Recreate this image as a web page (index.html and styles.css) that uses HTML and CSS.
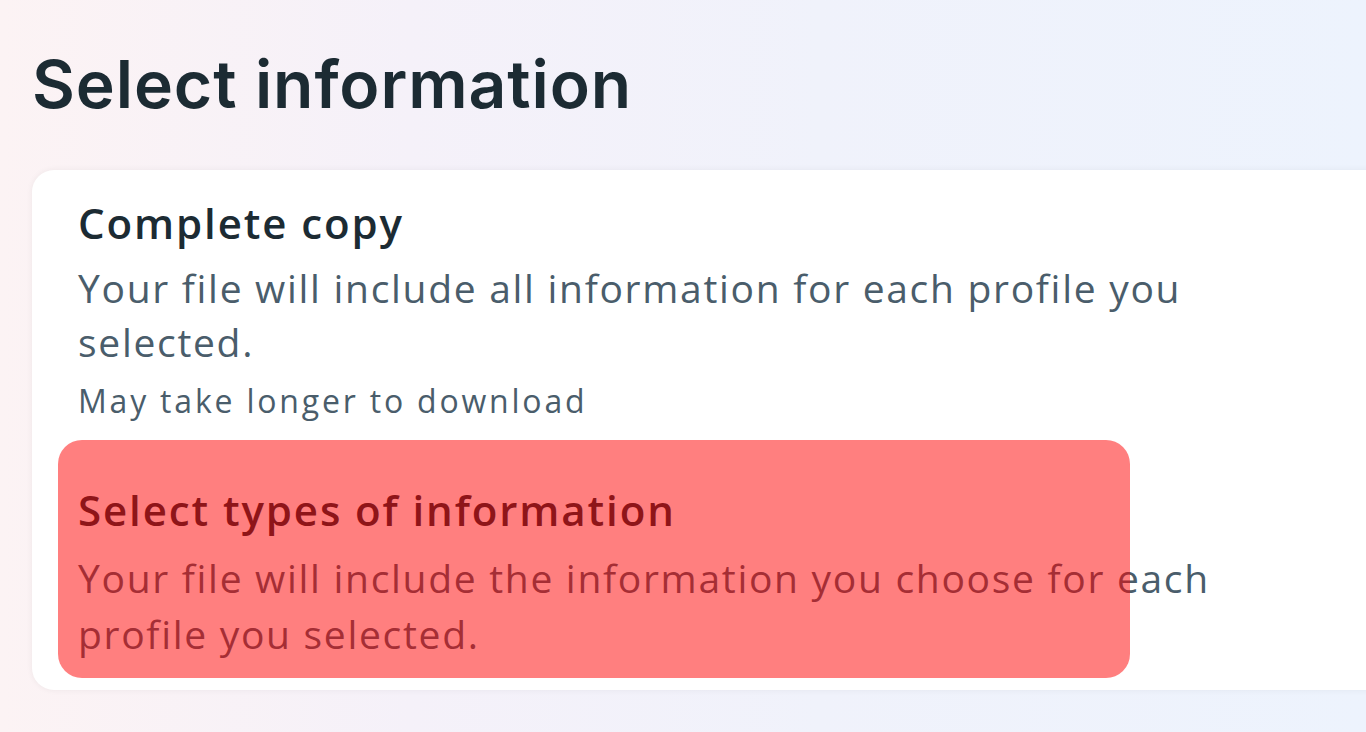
FILE: index.html
```html
<!DOCTYPE html>
<html lang="en">
<head>
<meta charset="utf-8">
<title>Select information</title>
<link rel="stylesheet" href="styles.css">
</head>
<body>
<main class="page">
  <h1 class="page-title">Select information</h1>
  <section class="card">
    <div class="option">
      <div class="option-title">Complete copy</div>
      <div class="option-desc">Your file will include all information for each profile you<br>selected.</div>
      <div class="option-note">May take longer to download</div>
    </div>
    <div class="option option-second">
      <div class="option-title">Select types of information</div>
      <div class="option-desc">Your file will include the information you choose for each<br>profile you selected.</div>
    </div>
    <div class="highlight"></div>
  </section>
</main>
</body>
</html>
```
FILE: styles.css
```css
html, body {
  margin: 0;
  padding: 0;
  height: 100%;
  overflow: hidden;
}
body {
  background: linear-gradient(90deg, #fcf3f4 0%, #f5f1f9 30%, #f0f2fb 60%, #edf3fd 100%);
  font-family: "Open Sans", "Liberation Sans", sans-serif;
  color: #1c2b33;
}
.page {
  padding: 44px 0 0 32px;
}
.page-title {
  margin: 0;
  font-family: "Inter", "Liberation Sans", sans-serif;
  font-weight: 600;
  font-size: 66px;
  line-height: 80px;
  letter-spacing: 0.9px;
  color: #1c2b33;
}
.card {
  position: relative;
  margin-top: 46px;
  width: 1400px;
  background: #fff;
  border-radius: 22px;
  box-shadow: 0 0 6px rgba(0, 0, 0, 0.06);
  padding: 28px 0 28px 46px;
  box-sizing: border-box;
}
.option-title {
  font-size: 42px;
  line-height: 50px;
  font-weight: 600;
  letter-spacing: 1.9px;
  color: #1c2b33;
}
.option-desc {
  margin-top: 13px;
  font-size: 39px;
  line-height: 54px;
  letter-spacing: 1.7px;
  color: #4a5d6b;
}
.option-note {
  margin-top: 12px;
  font-size: 32px;
  line-height: 40px;
  letter-spacing: 2.8px;
  color: #4a5d6b;
}
.option-second {
  margin-top: 64px;
}
.option-second .option-desc {
  margin-top: 15px;
  line-height: 56px;
}
.highlight {
  position: absolute;
  left: 26px;
  top: 270px;
  width: 1072px;
  height: 238px;
  border-radius: 24px;
  background: rgba(255, 0, 0, 0.5);
}
```
